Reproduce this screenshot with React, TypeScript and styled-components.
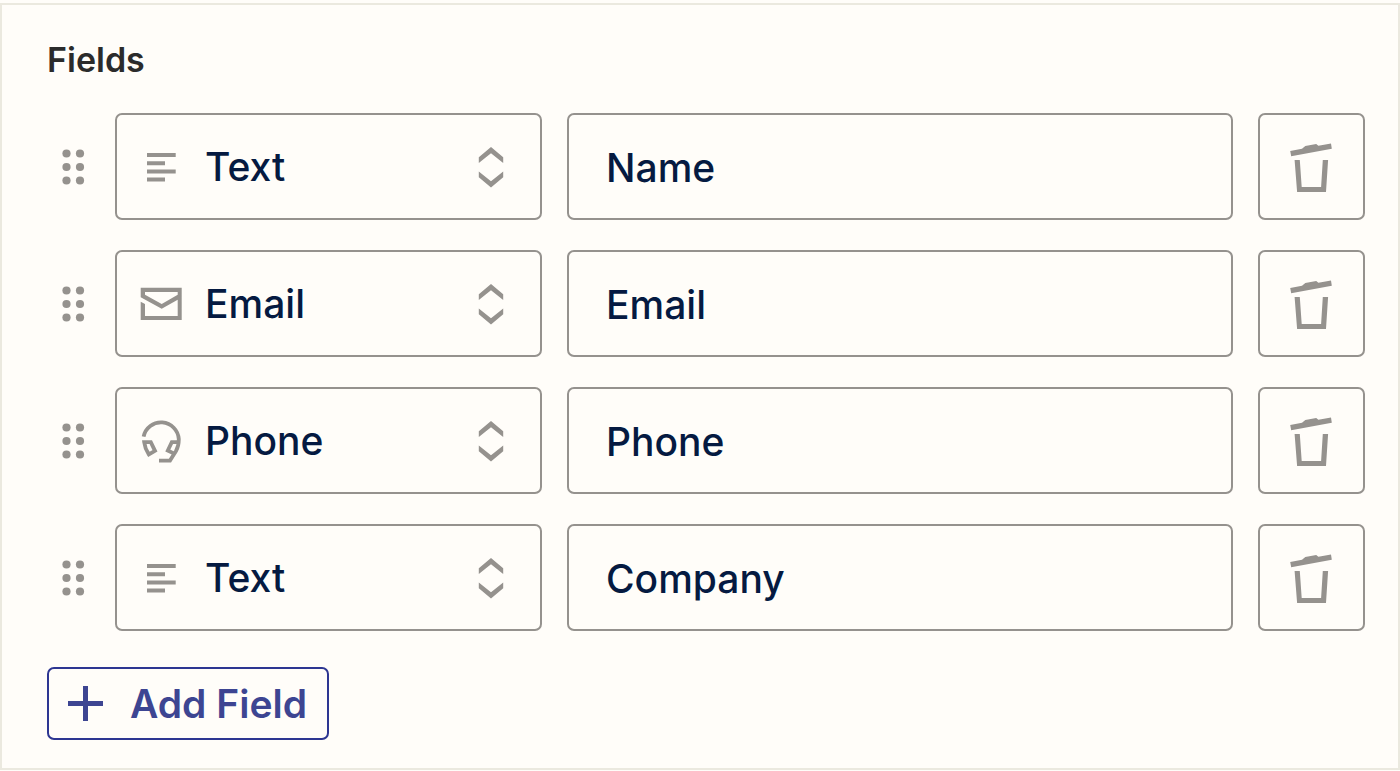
import React, { useState } from "react";
import styled, { createGlobalStyle } from "styled-components";

const colors = {
  surface: "#fffdf9",
  edge: "#ebe9df",
  line: "#95928e",
  ink: "#051a41",
  heading: "#2b2b2b",
  accent: "#3d4592",
  accentLine: "#2d3692",
};

const GlobalStyle = createGlobalStyle`
  *, *::before, *::after { box-sizing: border-box; }
  body {
    margin: 0;
    background: ${colors.surface};
    font-family: Inter, "Liberation Sans", sans-serif;
  }
`;

const Panel = styled.section`
  margin: 3px 0 0;
  padding: 32px 33px 28px 45px;
  border: 2px solid ${colors.edge};
  background: ${colors.surface};
`;

const Heading = styled.h2`
  margin: 0;
  color: ${colors.heading};
  font-size: 34px;
  font-weight: 600;
  line-height: 46px;
`;

const FieldList = styled.ul`
  display: flex;
  flex-direction: column;
  gap: 30px;
  margin: 30px 0 36px;
  padding: 0;
  list-style: none;
`;

const FieldRow = styled.li`
  display: grid;
  grid-template-columns: 43px minmax(0, 427fr) minmax(0, 666fr) 107px;
  gap: 25px;
  height: 107px;
`;

const PlainButton = styled.button`
  display: flex;
  align-items: center;
  margin: 0;
  padding: 0;
  border: none;
  background: transparent;
  color: ${colors.line};
  font-family: inherit;
  cursor: pointer;
`;

const DragHandle = styled(PlainButton)`
  justify-content: flex-end;
  cursor: grab;
`;

const DeleteButton = styled(PlainButton)`
  justify-content: center;
  border: 2px solid ${colors.line};
  border-radius: 7px;
`;

const AddButton = styled(PlainButton)`
  gap: 27px;
  height: 73px;
  padding: 0 20px 0 19px;
  border: 2px solid ${colors.accentLine};
  border-radius: 7px;
  color: ${colors.accent};
  font-size: 39px;
  font-weight: 600;
`;

const TypePicker = styled.div`
  display: grid;
  grid-template-columns: 92px minmax(0, 1fr) 102px;
  align-items: center;
  justify-items: center;
  color: ${colors.line};

  > svg {
    grid-row: 1;
    grid-column: 1;
    z-index: 1;
    pointer-events: none;
  }
  > svg:last-child {
    grid-column: 3;
  }
`;

const TypeSelect = styled.select`
  grid-row: 1;
  grid-column: 1 / -1;
  width: 100%;
  height: 107px;
  padding: 0 80px 0 88px;
  border: 2px solid ${colors.line};
  border-radius: 7px;
  appearance: none;
  background: transparent;
  color: ${colors.ink};
  font-family: inherit;
  font-size: 39px;
  font-weight: 500;
`;

const NameInput = styled.input`
  width: 100%;
  height: 107px;
  padding: 2px 37px 0;
  border: 2px solid ${colors.line};
  border-radius: 7px;
  background: transparent;
  color: ${colors.ink};
  font-family: inherit;
  font-size: 39px;
  font-weight: 500;
`;

const DotsIcon = () => (
  <svg width="34" height="48" viewBox="0 0 34 48" fill="currentColor" aria-hidden="true">
    {[10.5, 24, 37.5].map((y) => (
      <React.Fragment key={y}>
        <circle cx="10.5" cy={y} r="4.1" />
        <circle cx="24" cy={y} r="4.1" />
      </React.Fragment>
    ))}
  </svg>
);

const TextIcon = () => (
  <svg width="48" height="48" viewBox="0 0 48 48" fill="currentColor" aria-hidden="true">
    <path d="M10 10h28.7v4H10zM10 18.2h18v4H10zM10 26.4h28.7v4H10zM10 34.4h18v4H10z" />
  </svg>
);

const MailIcon = () => (
  <svg width="48" height="48" viewBox="0 0 48 48" fill="currentColor" fillRule="evenodd" aria-hidden="true">
    <path d="M3.7 7.7H44.7V40H3.7V21.7L8 24V36H40.7V19.8L24.7 28.7L3.7 17.3ZM8 12V14.8L24.7 24L40.7 14.8V12Z" />
  </svg>
);

const HeadsetIcon = () => (
  <svg width="48" height="48" viewBox="0 0 48 48" fill="none" stroke="currentColor" strokeWidth="3.8" aria-hidden="true">
    <path d="M6.6 19.6A17.8 17.8 0 0 1 41.8 22.2Q41.8 29 39 34L33 43.6H22" />
    <path d="M7.2 25.2H13.8L18 33.8L11.8 37.4Q8 31.8 7.2 25.2Z" />
    <path d="M41.4 25.2H34.8L30.8 33.5L37.2 36.6" />
  </svg>
);

const SortIcon = () => (
  <svg width="48" height="48" viewBox="0 0 48 48" fill="currentColor" aria-hidden="true">
    <path d="M24 4L36.2 14.2V20L24 10.2L11.8 20V14.2ZM24 44.4L36.2 34.2V28.4L24 38.2L11.8 28.4V34.2Z" />
  </svg>
);

const TrashIcon = () => (
  <svg width="48" height="50" viewBox="0 0 48 50" fill="currentColor" aria-hidden="true">
    <path d="M2.2 9L14 6.8L17.3 4L28.2 2L30.4 3.7L43 1.6L43.8 6.8L3.2 14.2Z" />
    <path d="M6.6 18H11.8L13.7 45H33.1L34.8 18H40.1L38 50H9.1Z" />
  </svg>
);

const PlusIcon = () => (
  <svg width="35" height="35" viewBox="0 0 35 35" fill="currentColor" aria-hidden="true">
    <path d="M15 0H20V15H35V20H20V35H15V20H0V15H15Z" />
  </svg>
);

type FieldType = "Text" | "Email" | "Phone";

const typeIcons: Record<FieldType, React.FC> = {
  Text: TextIcon,
  Email: MailIcon,
  Phone: HeadsetIcon,
};

interface Field {
  id: number;
  type: FieldType;
  name: string;
}

const initialFields: Field[] = [
  { id: 1, type: "Text", name: "Name" },
  { id: 2, type: "Email", name: "Email" },
  { id: 3, type: "Phone", name: "Phone" },
  { id: 4, type: "Text", name: "Company" },
];

export default function App() {
  const [fields, setFields] = useState<Field[]>(initialFields);

  const update = (id: number, patch: Partial<Field>) =>
    setFields((list) => list.map((f) => (f.id === id ? { ...f, ...patch } : f)));
  const remove = (id: number) => setFields((list) => list.filter((f) => f.id !== id));
  const add = () =>
    setFields((list) => [
      ...list,
      { id: Math.max(0, ...list.map((f) => f.id)) + 1, type: "Text", name: "" },
    ]);

  return (
    <>
      <GlobalStyle />
      <Panel aria-labelledby="fields-heading">
        <Heading id="fields-heading">Fields</Heading>
        <FieldList>
          {fields.map((field) => {
            const Icon = typeIcons[field.type];
            return (
              <FieldRow key={field.id}>
                <DragHandle type="button" aria-label="Reorder field">
                  <DotsIcon />
                </DragHandle>
                <TypePicker>
                  <Icon />
                  <TypeSelect
                    aria-label="Field type"
                    value={field.type}
                    onChange={(e) => update(field.id, { type: e.target.value as FieldType })}
                  >
                    {Object.keys(typeIcons).map((type) => (
                      <option key={type}>{type}</option>
                    ))}
                  </TypeSelect>
                  <SortIcon />
                </TypePicker>
                <NameInput
                  type="text"
                  aria-label="Field name"
                  value={field.name}
                  onChange={(e) => update(field.id, { name: e.target.value })}
                />
                <DeleteButton type="button" aria-label="Delete field" onClick={() => remove(field.id)}>
                  <TrashIcon />
                </DeleteButton>
              </FieldRow>
            );
          })}
        </FieldList>
        <AddButton type="button" onClick={add}>
          <PlusIcon />
          Add Field
        </AddButton>
      </Panel>
    </>
  );
}
